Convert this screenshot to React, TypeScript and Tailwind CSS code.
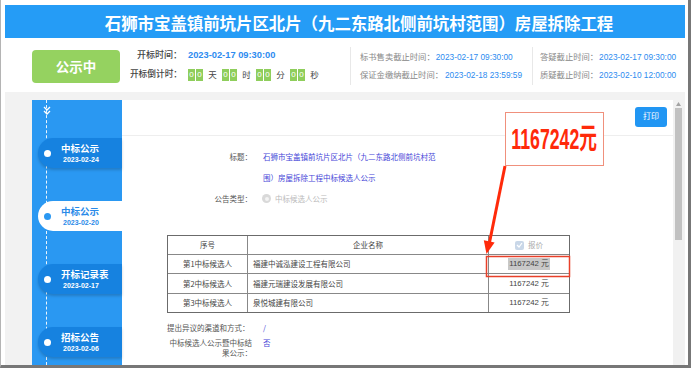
import React from "react";

const Digits = () => (
  <span className="flex gap-[1px]">
    <span className="w-[7px] h-[12px] bg-[#8fce5c] text-white text-[8px] leading-[12px] text-center">0</span>
    <span className="w-[7px] h-[12px] bg-[#8fce5c] text-white text-[8px] leading-[12px] text-center">0</span>
  </span>
);

const Unit = ({ t }: { t: string }) => (
  <span className="w-[9px] mx-[5px] text-[8.5px] text-[#444] leading-[12px] text-center">{t}</span>
);

type Item = { title: string; date: string; active?: boolean };
const items: Item[] = [
  { title: "中标公示", date: "2023-02-24" },
  { title: "中标公示", date: "2023-02-20", active: true },
  { title: "开标记录表", date: "2023-02-17" },
  { title: "招标公告", date: "2023-02-06" },
];

const rows = [
  { no: "第1中标候选人", name: "福建中诚泓建设工程有限公司", h: "h-[19px]", sel: true },
  { no: "第2中标候选人", name: "福建元瑞建设发展有限公司", h: "h-[20px]", sel: false },
  { no: "第3中标候选人", name: "泉悦城建有限公司", h: "h-[18px]", sel: false },
];

export default function App() {
  return (
    <div className="relative w-[694px] h-[371px] bg-white overflow-hidden font-['Liberation_Sans','Noto_Sans_CJK_SC',sans-serif]">
      <div className="w-[691px] h-[368px] border-l border-r-[3px] border-b-[3px] border-l-[#b4b4b4] border-r-[#777] border-b-[#777] pt-[5px] pl-[4px] flex flex-col">
        <div className="w-[680px] flex flex-col flex-1 min-h-0">
          {/* header */}
          <div className="h-[33px] bg-[#259cf6] flex items-center justify-center pl-[28px] pt-[3px] text-white font-bold text-[16.5px] font-['Noto_Sans_CJK_SC',sans-serif] tracking-[-0.1px]">
            石狮市宝盖镇前坑片区北片（九二东路北侧前坑村范围）房屋拆除工程
          </div>
          {/* info row */}
          <div className="h-[54px] flex items-start bg-white">
            <div className="mt-[12px] ml-[27px] w-[88px] h-[33px] rounded-[4px] bg-[#95d260] text-white font-bold text-[13.5px] flex items-center justify-center font-['Noto_Sans_CJK_SC',sans-serif]">
              公示中
            </div>
            <div className="ml-[8px] mt-[8px] w-[222px] flex flex-col">
              <div className="h-[19px] flex items-center">
                <span className="w-[54px] text-right text-[9px] text-[#444] font-medium">开标时间：</span>
                <span className="ml-[6px] text-[9.3px] font-bold text-[#2d8cf0]">2023-02-17 09:30:00</span>
              </div>
              <div className="h-[19px] flex items-center">
                <span className="w-[54px] text-right text-[8.7px] text-[#444] font-medium whitespace-nowrap">开标倒计时：</span>
                <span className="ml-[6px] flex items-center">
                  <Digits />
                  <Unit t="天" />
                  <Digits />
                  <Unit t="时" />
                  <Digits />
                  <Unit t="分" />
                  <Digits />
                  <Unit t="秒" />
                </span>
              </div>
            </div>
            <div className="mt-[9px] h-[38px] w-px bg-[#e8e8e8]" />
            <div className="pl-[9px] mt-[10px] w-[181px] flex flex-col text-[8.3px]">
              <div className="h-[18px] flex items-center whitespace-nowrap">
                <span className="text-[#888]">标书售卖截止时间：</span>
                <span className="ml-[1px] text-[#2d8cf0]">2023-02-17 09:30:00</span>
              </div>
              <div className="h-[18px] flex items-center whitespace-nowrap">
                <span className="text-[#888]">保证金缴纳截止时间：</span>
                <span className="ml-[2px] text-[#2d8cf0]">2023-02-18 23:59:59</span>
              </div>
            </div>
            <div className="mt-[9px] h-[38px] w-px bg-[#e8e8e8]" />
            <div className="pl-[7px] mt-[10px] flex flex-col text-[8.3px]">
              <div className="h-[18px] flex items-center whitespace-nowrap">
                <span className="text-[#888]">答疑截止时间：</span>
                <span className="ml-[1px] text-[#2d8cf0]">2023-02-17 09:30:00</span>
              </div>
              <div className="h-[18px] flex items-center whitespace-nowrap">
                <span className="text-[#888]">质疑截止时间：</span>
                <span className="ml-[1px] text-[#2d8cf0]">2023-02-10 12:00:00</span>
              </div>
            </div>
          </div>
          {/* gray area */}
          <div className="flex-1 min-h-0 bg-[#f2f2f2] flex pt-[8px] pl-[27px] pr-[1px] overflow-hidden">
            {/* sidebar */}
            <div className="relative w-[90px] bg-[#2a98f2] flex flex-col pt-[38px] gap-[33px]">
              <div className="absolute left-[14px] top-0 bottom-0 border-l border-dashed border-white/90" />
              <svg className="absolute left-[11px] top-[6px]" width="8" height="10" viewBox="0 0 8 10">
                <polyline points="1,1 4,4 7,1" fill="none" stroke="white" strokeWidth="1.3" />
                <polyline points="1,5 4,8 7,5" fill="none" stroke="white" strokeWidth="1.3" />
              </svg>
              {items.map((it, i) => (
                <div
                  key={i}
                  className={
                    "relative ml-[6px] h-[30px] shrink-0 rounded-l-full flex flex-col pl-[23px] pt-[5px] " +
                    (it.active
                      ? "bg-white text-[#2a8ae8]"
                      : "bg-[#1682e0] text-white shadow-[0_2px_3px_rgba(0,0,0,0.18)]")
                  }
                >
                  <span
                    className={
                      "absolute left-[5.5px] top-[11.5px] w-[7px] h-[7px] rounded-full " +
                      (it.active ? "bg-[#2a98f2]" : "bg-white")
                    }
                  />
                  <span className="text-[9.5px] font-bold leading-[10px] font-['Noto_Sans_CJK_SC',sans-serif]">{it.title}</span>
                  <span className="ml-[2px] mt-[3px] text-[7px] font-bold leading-[8px]">{it.date}</span>
                </div>
              ))}
            </div>
            {/* content */}
            <div className="w-[551px] bg-white flex flex-col">
              <div className="h-[36px] border-b border-[#eeeeee] flex justify-end items-start pt-[7px] pr-[6px] shrink-0">
                <div className="w-[32px] h-[20px] rounded-[3px] bg-[#2196f3] text-white text-[8px] flex items-center justify-center">
                  打印
                </div>
              </div>
              <div className="pl-[45px] pt-[10px] text-[7.5px] text-[#555] font-['Noto_Sans_CJK_SC',sans-serif]">
                <div className="flex leading-[21px]">
                  <span className="w-[85px] text-right shrink-0">标题：</span>
                  <span className="ml-[11px] w-[183px] text-[#4646d8]">
                    石狮市宝盖镇前坑片区北片（九二东路北侧前坑村范围）房屋拆除工程中标候选人公示
                  </span>
                </div>
                <div className="flex leading-[21px] items-center">
                  <span className="w-[85px] text-right shrink-0">公告类型：</span>
                  <span className="ml-[10px] w-[9px] h-[9px] rounded-full bg-[#d9d9d9] flex items-center justify-center">
                    <span className="w-[4px] h-[4px] rounded-full bg-[#f4f4f4]" />
                  </span>
                  <span className="ml-[4px] text-[#bbbbbb]">中标候选人公示</span>
                </div>
                {/* table */}
                <div className="mt-[26px] w-[403px] border border-[#6b6b6b] text-[#444]">
                  <div className="h-[19px] flex border-b border-[#888]">
                    <div className="w-[80px] border-r border-[#888] flex items-center justify-center">序号</div>
                    <div className="w-[241px] border-r border-[#888] flex items-center justify-center">企业名称</div>
                    <div className="flex-1 flex items-center justify-center text-[#aaa]">
                      <span className="w-[9px] h-[9px] rounded-[2px] bg-[#c9d7e8] flex items-center justify-center mr-[4px]">
                        <svg width="7" height="6" viewBox="0 0 7 6">
                          <polyline points="1,3 3,5 6,1" fill="none" stroke="white" strokeWidth="1.2" />
                        </svg>
                      </span>
                      报价
                    </div>
                  </div>
                  {rows.map((r, i) => (
                    <div key={i} className={r.h + " flex " + (i < 2 ? "border-b border-[#888]" : "")}>
                      <div className="w-[80px] border-r border-[#888] flex items-center justify-center">{r.no}</div>
                      <div className="w-[241px] border-r border-[#888] flex items-center pl-[5px]">{r.name}</div>
                      <div className="flex-1 flex items-center justify-center font-['Liberation_Sans','Noto_Sans_CJK_SC',sans-serif] text-[7.8px]">
                        <span className={r.sel ? "bg-[#c8c8c8] px-[1px]" : ""}>1167242 元</span>
                      </div>
                    </div>
                  ))}
                </div>
                <div className="mt-[4px] flex leading-[21px]">
                  <span className="w-[85px] shrink-0 text-left">提出异议的渠道和方式：</span>
                  <span className="ml-[11px] text-[#4646d8]">/</span>
                </div>
                <div className="flex">
                  <span className="w-[85px] shrink-0 text-right leading-[9.5px]">中标候选人公示暨中标结果公示：</span>
                  <span className="ml-[11px] text-[#4646d8] leading-[9.5px]">否</span>
                </div>
              </div>
            </div>
            {/* scrollbar */}
            <div className="relative w-[11px] bg-[#f1f1f1]">
              <svg className="absolute left-[3px] top-[2px]" width="5" height="4" viewBox="0 0 5 4">
                <polygon points="2.5,0 5,4 0,4" fill="#a3a3a3" />
              </svg>
              <div className="absolute left-[2px] top-[8px] w-[7px] h-[132px] bg-[#c1c1c1]" />
            </div>
          </div>
        </div>
      </div>

      {/* annotation */}
      <div className="absolute left-[505px] top-[112px] w-[99px] h-[54px] border border-[#f0907c] bg-white flex items-center justify-center">
        <span className="inline-block scale-x-[0.61] text-[29px] font-bold text-[#ff2a0a] whitespace-nowrap leading-none">
          1167242元
        </span>
      </div>
      <svg className="absolute left-0 top-0 pointer-events-none" width="694" height="371" viewBox="0 0 694 371">
        <line x1="505" y1="166" x2="489.6" y2="242" stroke="#ff2a0a" strokeWidth="3" />
        <polygon points="486.5,254 483.8,240.2 494.6,242.4" fill="#ff2a0a" />
        <rect x="486.5" y="256.5" width="83" height="20" fill="none" stroke="#e8402a" strokeWidth="1.5" />
      </svg>
    </div>
  );
}
